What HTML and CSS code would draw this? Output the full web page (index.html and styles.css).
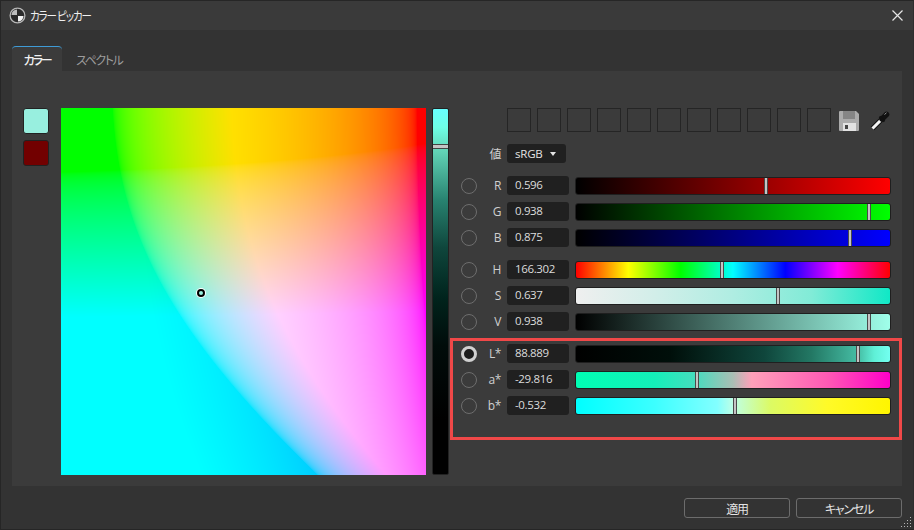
FILE: index.html
```html
<!DOCTYPE html>
<html lang="ja">
<head>
<meta charset="utf-8">
<title>カラー ピッカー</title>
<link rel="stylesheet" href="styles.css">
</head>
<body>
<div class="window">
  <header class="titlebar">
    <svg class="app-icon" width="17" height="17" viewBox="0 0 17 17"><circle cx="8.5" cy="8.5" r="8" fill="#2b2b2b"/><path d="M8 2.5A5.5 5.5 0 0 0 2.5 8H8Z" fill="#bdbdbd"/><path d="M9 9V14.5A5.5 5.5 0 0 0 14.5 9Z" fill="#f2f2f2"/><circle cx="8.5" cy="8.5" r="7.4" fill="none" stroke="#b8b8b8" stroke-width="1.3"/></svg>
    <span class="title">カラー ピッカー</span>
    <svg class="close" width="11" height="11" viewBox="0 0 11 11"><path d="M.5.5l10 10M10.5.5l-10 10" stroke="#e6e6e6" stroke-width="1.2" fill="none"/></svg>
  </header>
  <div class="content">
    <nav class="tabs">
      <div class="tab active">カラー</div>
      <div class="tab">スペクトル</div>
    </nav>
    <main class="panel">
      <div class="swatches">
        <div class="swatch current"></div>
        <div class="swatch previous"></div>
      </div>
      <div class="field">
        <canvas id="field" width="365" height="367"></canvas>
        <span class="cursor"></span>
      </div>
      <div class="vslider">
        <span class="vhandle"></span>
      </div>
      <div class="controls">
        <div class="palette">
          <span class="slot"></span><span class="slot"></span><span class="slot"></span><span class="slot"></span><span class="slot"></span><span class="slot"></span><span class="slot"></span><span class="slot"></span><span class="slot"></span><span class="slot"></span><span class="slot"></span>
          <svg class="save" width="20" height="20" viewBox="0 0 20 20"><path d="M1 0H17L20 3V19A1 1 0 0 1 19 20H1A1 1 0 0 1 0 19V1A1 1 0 0 1 1 0Z" fill="#ababab"/><rect x="4" y="0" width="12" height="8" fill="#858585"/><rect x="4" y="12" width="13" height="8" fill="#e2e2e2"/><rect x="6" y="14" width="3" height="4" fill="#444"/></svg>
          <svg class="dropper" width="20" height="20" viewBox="0 0 20 20" fill="none"><path d="M2.5 17.5L11 9" stroke="#111" stroke-width="5"/><path d="M2.5 17.5L11 9" stroke="#f4f4f4" stroke-width="3"/><path d="M12 8L16.5 3.5" stroke="#111" stroke-width="5.5" stroke-linecap="round"/><path d="M9.5 5.5L14.5 10.5" stroke="#111" stroke-width="2.2"/><path d="M14.5 3.5L16.5 1.8" stroke="#9a9a9a"/></svg>
        </div>
        <div class="row mode-row">
          <span></span>
          <label class="lab cjk">値</label>
          <div class="combo">sRGB<i class="caret"></i></div>
        </div>
        <section class="group">
          <div class="row"><span class="radio"></span><label class="lab">R</label><div class="num">0.596</div><div class="bar g-r"><i class="handle" style="left:60.5%"></i></div></div>
          <div class="row"><span class="radio"></span><label class="lab">G</label><div class="num">0.938</div><div class="bar g-g"><i class="handle" style="left:93.3%"></i></div></div>
          <div class="row"><span class="radio"></span><label class="lab">B</label><div class="num">0.875</div><div class="bar g-b"><i class="handle" style="left:87.4%"></i></div></div>
        </section>
        <section class="group">
          <div class="row"><span class="radio"></span><label class="lab">H</label><div class="num">166.302</div><div class="bar g-h"><i class="handle" style="left:46.5%"></i></div></div>
          <div class="row"><span class="radio"></span><label class="lab">S</label><div class="num">0.637</div><div class="bar g-s"><i class="handle" style="left:64.2%"></i></div></div>
          <div class="row"><span class="radio"></span><label class="lab">V</label><div class="num">0.938</div><div class="bar g-v"><i class="handle" style="left:93.3%"></i></div></div>
        </section>
        <section class="group lab-group">
          <div class="row"><span class="radio on"></span><label class="lab">L*</label><div class="num">88.889</div><div class="bar g-l"><i class="handle" style="left:89.8%"></i></div></div>
          <div class="row"><span class="radio"></span><label class="lab">a*</label><div class="num">-29.816</div><div class="bar g-a"><i class="handle" style="left:38.5%"></i></div></div>
          <div class="row"><span class="radio"></span><label class="lab">b*</label><div class="num">-0.532</div><div class="bar g-bs"><i class="handle" style="left:50.6%"></i></div></div>
          <div class="highlight"></div>
        </section>
      </div>
    </main>
    <footer class="footer">
      <button class="btn">適用</button>
      <button class="btn">キャンセル</button>
    </footer>
  </div>
  <svg class="grip" width="13" height="13" viewBox="0 0 13 13" fill="#b5b5b5"><rect x="10" y="1" width="1" height="1"/><rect x="7" y="4" width="1" height="1"/><rect x="10" y="4" width="1" height="1"/><rect x="4" y="7" width="1" height="1"/><rect x="7" y="7" width="1" height="1"/><rect x="10" y="7" width="1" height="1"/><rect x="1" y="10" width="1" height="1"/><rect x="4" y="10" width="1" height="1"/><rect x="7" y="10" width="1" height="1"/><rect x="10" y="10" width="1" height="1"/></svg>
</div>
<script src="script.js"></script>
</body>
</html>
```
FILE: styles.css
```css
* { box-sizing: border-box; }
html, body { margin: 0; height: 100%; background: #333; }
body { font: 11.5px "Open Sans", "Noto Sans CJK JP", sans-serif; color: #e0e0e0; overflow: hidden; }

.window { position: relative; width: 914px; height: 530px; display: flex; flex-direction: column; background: #333; border: 1px solid #262626; border-right-color: #2e2e2e; }

.titlebar { height: 29px; flex: none; display: flex; align-items: center; padding: 0 10px 0 8px; background: #3a3a3a; }
.app-icon { flex: none; }
.title { margin-left: 4px; font: 12px "Noto Sans CJK JP", sans-serif; font-feature-settings: "palt" 1; letter-spacing: -1.2px; color: #f0f0f0; transform: scaleX(.87); transform-origin: left center; }
.close { margin-left: auto; }

.content { flex: 1; display: flex; flex-direction: column; padding: 16px 11px 0 11px; min-height: 0; }

.tabs { display: flex; height: 25px; flex: none; }
.tab { height: 25px; display: flex; align-items: center; justify-content: center; font: 12px "Noto Sans CJK JP", sans-serif; font-feature-settings: "palt" 1; letter-spacing: -1.4px; color: #9c9c9c; padding: 1px 14px 0; }
.tab.active { width: 50px; padding: 1px 0 0; letter-spacing: -2.2px; color: #f0f0f0; background: #3b3b3b; border-top: 1px solid #3f9bd6; border-radius: 4px 4px 0 0; font-weight: 500; }

.panel { height: 415px; flex: none; display: flex; align-items: flex-start; background: #3b3b3b; padding: 37px 11px 0 11px; }

.swatches { width: 38px; flex: none; display: flex; flex-direction: column; gap: 6px; }
.swatch { width: 26px; height: 26px; border: 1px solid #222; border-radius: 3px; }
.current { background: #98efdf; }
.previous { background: #720000; }

.field { position: relative; width: 365px; height: 367px; flex: none; }
.field canvas { display: block; }
.cursor { position: absolute; left: 136px; top: 181px; width: 8px; height: 8px; border-radius: 50%; background: #98efdf; border: 2px solid #000; box-shadow: 0 0 0 1px #fff; }

.vslider { position: relative; margin-left: 6px; width: 17px; height: 367px; flex: none; border: 1px solid #222; border-radius: 2px;
  background: linear-gradient(180deg, #68ffff, #6effe6 5%, #64d7b9 11%, #288270 25%, #0f463c 38%, #00231c 52%, #000c0a 65%, #000 85%); }
.vhandle { position: absolute; left: 0; right: 0; top: 35px; height: 5px; background: #c4c4c4; border-block: 1px solid #444; }

.controls { margin-left: 12px; width: 430px; flex: none; display: flex; flex-direction: column; }

.palette { display: flex; align-items: center; gap: 6px; height: 24px; padding-left: 46px; }
.slot { width: 24px; height: 24px; border: 1px solid #252525; }
.save { margin-left: 2px; margin-top: 1px; }
.dropper { margin-left: 5px; margin-top: 1px; }

.row { display: grid; grid-template-columns: 16px 18px 62px 1fr; column-gap: 6px; align-items: center; height: 19px; }
.mode-row { margin-top: 12px; margin-bottom: 13px; grid-template-columns: 16px 18px auto; }

.group { position: relative; display: flex; flex-direction: column; gap: 7px; margin-bottom: 13px; }

.radio { width: 16px; height: 16px; border-radius: 50%; border: 1px solid #6e6e6e; background: #3b3b3b; }
.radio.on { background: #1c1c1c; border: 3.5px solid #d0d0d0; }

.lab { text-align: right; font-size: 12px; letter-spacing: -.4px; color: #cfcfcf; white-space: nowrap; }
.cjk { font-family: "Noto Sans CJK JP", sans-serif; }

.num { height: 19px; line-height: 18px; padding-left: 8px; background: #202020; border-radius: 3px; font-size: 11.5px; letter-spacing: -.35px; color: #dcdcdc; }

.combo { width: 59px; height: 19px; display: flex; align-items: center; padding-left: 8px; background: #202020; border-radius: 3px; font-size: 11.5px; letter-spacing: -.2px; color: #e4e4e4; }
.caret { margin-left: 7px; width: 0; height: 0; border: 3.5px solid transparent; border-top: 4px solid #e4e4e4; border-bottom: 0; }

.bar { position: relative; height: 18px; margin-top: 1px; border: 1px solid #1f1f1f; border-radius: 3px; }
.handle { position: absolute; top: 0; bottom: 0; width: 4px; margin-left: -2px; background: #c4c4c4; border-inline: 1px solid #4a4a4a; }

.g-r { background: linear-gradient(90deg, #000, #f00); }
.g-g { background: linear-gradient(90deg, #000, #0f0); }
.g-b { background: linear-gradient(90deg, #000, #00f); }
.g-h { background: linear-gradient(90deg, #f00, #ff0 16.67%, #0f0 33.33%, #0ff 50%, #00f 66.67%, #f0f 83.33%, #f00); }
.g-s { background: linear-gradient(90deg, #efefef, rgb(210,238,233) 25%, rgb(175,237,226) 50%, rgb(129,235,215) 75%, rgb(16,232,198)); }
.g-v { background: linear-gradient(90deg, #000, #a0ffea); }
.g-l { background: linear-gradient(90deg, #000, rgb(0,15,10) 30%, rgb(15,70,60) 60%, rgb(35,120,100) 75%, rgb(70,190,165) 90%, rgb(95,240,215) 95%, rgb(115,255,240)); }
.g-a { background: linear-gradient(90deg, rgb(0,255,180), rgb(20,240,185) 25%, rgb(70,220,190) 38%, rgb(170,190,180) 50%, rgb(255,160,185) 56%, rgb(255,90,180) 80%, rgb(255,0,200)); }
.g-bs { background: linear-gradient(90deg, #0ff, rgb(60,255,255) 25%, rgb(130,255,255) 45%, rgb(190,255,230) 50%, rgb(220,250,100) 62%, rgb(255,250,40) 80%, rgb(255,245,0)); }

.highlight { position: absolute; left: -11px; right: -11px; top: -6px; height: 102px; border: 3px solid #f04848; pointer-events: none; }

.footer { flex: 1; display: flex; justify-content: flex-end; gap: 6px; padding-top: 12px; }
.btn { width: 106px; height: 20px; padding: 0; background: #333; border: 1px solid #6c6c6c; border-radius: 3px; font: 12px "Noto Sans CJK JP", sans-serif; font-feature-settings: "palt" 1; letter-spacing: -1.2px; color: #e4e4e4; }

.grip { position: absolute; right: 0; bottom: 0; }
```
FILE: script.js
```js
function f(t) { return t > 0.206897 ? t * t * t : (t - 16 / 116) / 7.787; }
function g(c) {
  c = Math.min(1, Math.max(0, c));
  return 255 * (c <= 0.0031308 ? 12.92 * c : 1.055 * Math.pow(c, 1 / 2.4) - 0.055);
}
function lab(L, a, b) {
  var fy = (L + 16) / 116, X = 0.95047 * f(fy + a / 500), Y = f(fy), Z = 1.08883 * f(fy - b / 200);
  return [
    g(3.2406 * X - 1.5372 * Y - 0.4986 * Z),
    g(-0.9689 * X + 1.8758 * Y + 0.0415 * Z),
    g(0.0557 * X - 0.204 * Y + 1.057 * Z)
  ];
}
var c = document.getElementById("field"), x = c.getContext("2d"), w = c.width, h = c.height;
var im = x.createImageData(w, h);
for (var j = 0; j < h; j++) for (var i = 0; i < w; i++) {
  var p = lab(88.889, -128 + 255 * i / (w - 1), 127 - 255 * j / (h - 1)), k = (j * w + i) * 4;
  im.data[k] = p[0]; im.data[k + 1] = p[1]; im.data[k + 2] = p[2]; im.data[k + 3] = 255;
}
x.putImageData(im, 0, 0);
```
